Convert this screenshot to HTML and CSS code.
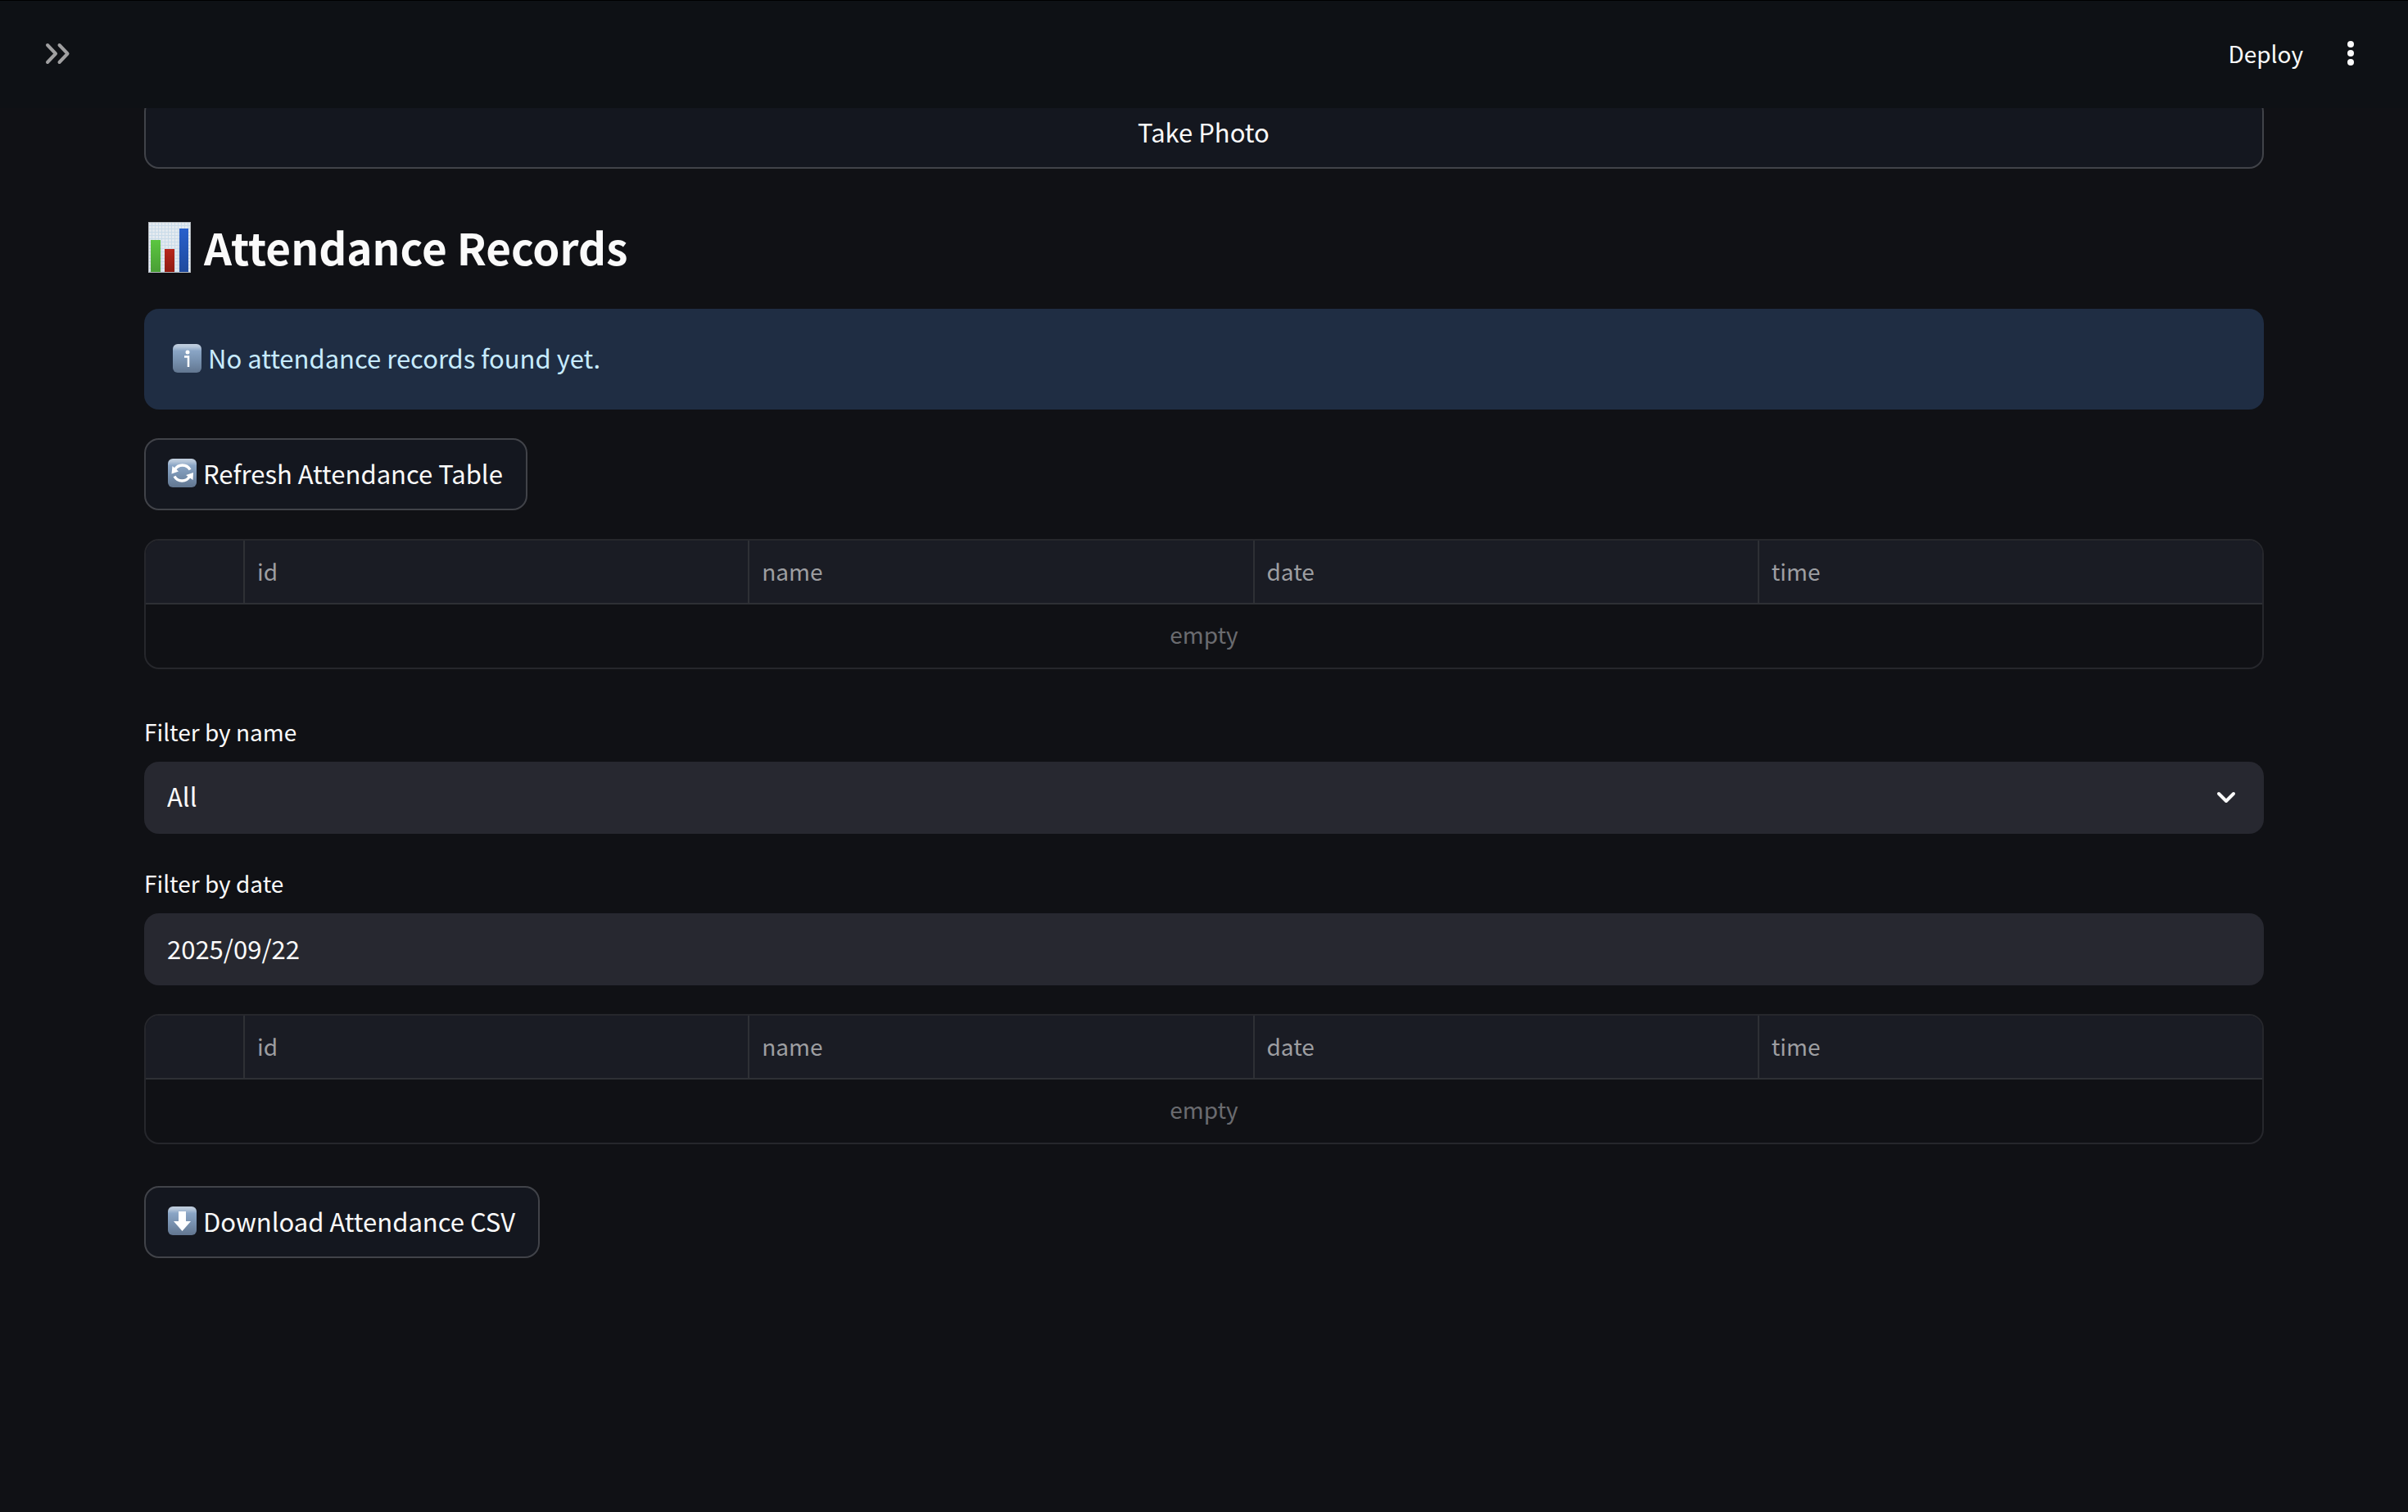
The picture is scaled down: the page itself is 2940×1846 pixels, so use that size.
FILE: index.html
```html
<!DOCTYPE html>
<html lang="en">
<head>
<meta charset="utf-8">
<title>Attendance Records</title>
<link rel="stylesheet" href="styles.css">
</head>
<body>
<svg class="defs" aria-hidden="true">
  <defs>
    <linearGradient id="tile" x1="0" y1="0" x2="0" y2="1">
      <stop offset="0" stop-color="#c3d0df"/>
      <stop offset=".1" stop-color="#b4c5d9"/>
      <stop offset=".24" stop-color="#8aa5c5"/>
      <stop offset=".6" stop-color="#7790ae"/>
      <stop offset="1" stop-color="#627690"/>
    </linearGradient>
    <linearGradient id="green" x1="0" y1="0" x2="0" y2="1"><stop offset="0" stop-color="#5bc640"/><stop offset="1" stop-color="#4a9f36"/></linearGradient>
    <linearGradient id="red" x1="0" y1="0" x2="0" y2="1"><stop offset="0" stop-color="#b8271d"/><stop offset="1" stop-color="#8f1c12"/></linearGradient>
    <linearGradient id="blue" x1="0" y1="0" x2="0" y2="1"><stop offset="0" stop-color="#2860cc"/><stop offset="1" stop-color="#204b9e"/></linearGradient>
    <pattern id="grid" width="4" height="4" patternUnits="userSpaceOnUse">
      <rect width="4" height="4" fill="#e4eaf0"/>
      <path d="M0 .5H4M.5 0V4" stroke="#c9dbe9"/>
    </pattern>
  </defs>
</svg>

<header class="topbar">
  <button class="icon-button" type="button" aria-label="Open sidebar">
    <svg class="icon" width="36" height="36" viewBox="0 0 36 36"><path d="M5 8l10 10.500L5 29M19.500 8l10 10.500L19.500 29" fill="none" stroke="#a0a0a1" stroke-width="4" stroke-linecap="round" stroke-linejoin="round"/></svg>
  </button>
  <div class="actions">
    <button class="deploy" type="button">Deploy</button>
    <button class="icon-button" type="button" aria-label="Main menu">
      <svg class="icon" width="36" height="36" viewBox="0 0 36 36" fill="#fafafa"><circle cx="18" cy="7" r="4"/><circle cx="18" cy="18" r="4"/><circle cx="18" cy="29" r="4"/></svg>
    </button>
  </div>
</header>

<main class="content">
  <button class="button button-wide" type="button">Take Photo</button>

  <h2 class="title">
    <svg class="chart" width="52" height="62" viewBox="0 0 52 62">
      <rect width="52" height="62" fill="url(#grid)"/>
      <rect x=".5" y=".5" width="51" height="61" fill="none" stroke="#b3b8bd"/>
      <rect x="3" y="22" width="12" height="39" fill="url(#green)"/>
      <rect x="20" y="33" width="12" height="28" fill="url(#red)"/>
      <rect x="38" y="8" width="11" height="53" fill="url(#blue)"/>
    </svg>
    <span>Attendance Records</span>
  </h2>

  <div class="alert" role="status">
    <svg class="tile" width="35" height="35" viewBox="0 0 35 35"><rect width="35" height="35" rx="6" fill="url(#tile)"/><circle cx="18" cy="10" r="2.500" fill="#fff"/><path d="M14 15.500h5V28" fill="none" stroke="#fff" stroke-width="2.500"/></svg>
    <span>No attendance records found yet.</span>
  </div>

  <button class="button" type="button">
    <svg class="tile" width="35" height="35" viewBox="0 0 35 35"><rect width="35" height="35" rx="6" fill="url(#tile)"/><g fill="none" stroke="#fff" stroke-width="3.400"><path d="M8.500 13.500A10.500 10.500 0 0 1 27 13.500"/><path d="M26.500 21.500A10.500 10.500 0 0 1 8 21.500"/></g><path d="M5.500 9L4.500 18.500L13 15.500ZM22 20L31 17L30.500 26Z" fill="#fff"/></svg>
    <span>Refresh Attendance Table</span>
  </button>

  <div class="frame">
    <table class="grid">
      <colgroup><col class="index-col"><col><col><col><col></colgroup>
      <thead><tr><td></td><th scope="col">id</th><th scope="col">name</th><th scope="col">date</th><th scope="col">time</th></tr></thead>
      <tbody><tr><td class="empty" colspan="5">empty</td></tr></tbody>
    </table>
  </div>

  <div class="field">
    <label class="label" for="name-filter">Filter by name</label>
    <div class="select-wrap">
      <select class="control" id="name-filter"><option>All</option></select>
      <svg class="icon chevron" width="36" height="36" viewBox="0 0 36 36"><path d="M9 14l9 9 9-9" fill="none" stroke="#fafafa" stroke-width="4" stroke-linecap="round" stroke-linejoin="round"/></svg>
    </div>
  </div>

  <div class="field">
    <label class="label" for="date-filter">Filter by date</label>
    <input class="control" id="date-filter" type="text" value="2025/09/22">
  </div>

  <div class="frame">
    <table class="grid">
      <colgroup><col class="index-col"><col><col><col><col></colgroup>
      <thead><tr><td></td><th scope="col">id</th><th scope="col">name</th><th scope="col">date</th><th scope="col">time</th></tr></thead>
      <tbody><tr><td class="empty" colspan="5">empty</td></tr></tbody>
    </table>
  </div>

  <button class="button" type="button">
    <svg class="tile" width="35" height="35" viewBox="0 0 35 35"><rect width="35" height="35" rx="6" fill="url(#tile)"/><path d="M13 6h9v12h6L17.500 30L7 18h6Z" fill="#fff"/></svg>
    <span>Download Attendance CSV</span>
  </button>
</main>
</body>
</html>
```
FILE: styles.css
```css
* { box-sizing: border-box; }

body {
  margin: 0;
  background: #101115;
  color: #fafafa;
  font-family: "Noto Sans CJK SC", "Noto Sans", sans-serif;
  font-size: 31px;
  font-weight: 400;
  line-height: 56px;
}

button, input, select { font: inherit; color: inherit; }
svg { display: block; flex: none; }
.defs { position: absolute; width: 0; height: 0; }

.topbar {
  position: sticky;
  top: 0;
  z-index: 1;
  display: flex;
  align-items: center;
  justify-content: space-between;
  height: 132px;
  padding: 0 52px 4px 53px;
  border-top: 1px solid #000;
  background: #0e1115;
}

.actions { display: flex; align-items: center; gap: 40px; }
.icon-button, .deploy { padding: 0; border: 0; background: none; }
.deploy { font-size: 28px; }

.content {
  display: flex;
  flex-direction: column;
  align-items: flex-start;
  gap: 35px;
  margin-top: -14px;
  padding: 0 176px 176px;
}

.button {
  display: flex;
  align-items: center;
  justify-content: center;
  gap: 8px;
  height: 88px;
  padding: 0 28px 3px 27px;
  border: 2px solid #414349;
  border-radius: 18px;
  background: #14171f;
}
.button-wide { width: 100%; }

.title {
  display: flex;
  align-items: center;
  gap: 16px;
  margin: 0;
  padding: 23px 0 3px 5px;
  font-size: 53px;
  font-weight: 700;
  line-height: 75px;
}

.alert {
  display: flex;
  align-items: center;
  gap: 8px;
  width: 100%;
  padding: 32px 35px 35px;
  border-radius: 18px;
  background: #1f2d43;
  color: #c7ebff;
}

.frame {
  width: 100%;
  margin-bottom: 16px;
  overflow: hidden;
  border: 2px solid #26272c;
  border-radius: 18px;
}

.grid {
  width: 100%;
  table-layout: fixed;
  border-collapse: separate;
  border-spacing: 0;
  font-size: 28px;
}
.index-col { width: 119px; }
.grid th, .grid td { height: 77px; padding: 0 15px 5px; }
.grid thead th, .grid thead td {
  height: 78px;
  padding-bottom: 2px;
  border-bottom: 2px solid #2e3035;
  background: #1a1c24;
  color: #9d9ea1;
  font-weight: 400;
  text-align: left;
}
.grid thead th { border-left: 2px solid #2e3035; }
.grid .empty { color: #6a6b6f; text-align: center; }

.field { display: flex; flex-direction: column; gap: 11px; width: 100%; }
.label { font-size: 28px; line-height: 51px; }

.control {
  display: block;
  width: 100%;
  height: 88px;
  padding: 0 28px 4px;
  border: 0;
  border-radius: 18px;
  background: #272830;
  appearance: none;
}
.select-wrap { position: relative; }
.chevron {
  position: absolute;
  top: 25px;
  right: 28px;
  pointer-events: none;
}
```
